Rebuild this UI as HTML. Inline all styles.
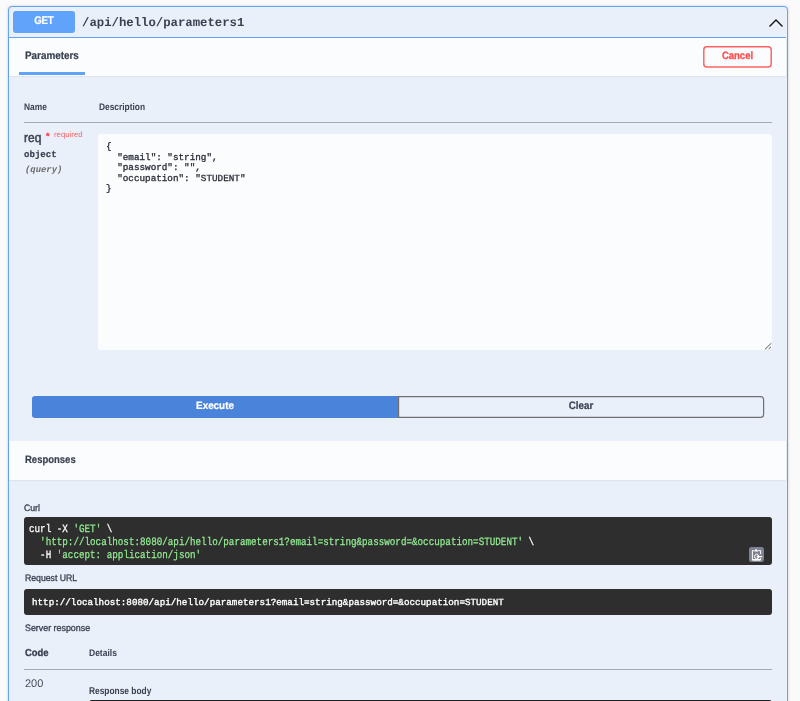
<!DOCTYPE html>
<html><head><meta charset="utf-8">
<style>
html,body{margin:0;padding:0;width:800px;height:701px;overflow:hidden;}
body{width:800px;height:701px;overflow:hidden;background:#fafafa;font-family:"Liberation Sans",sans-serif;color:#3b4151;}
#root{position:relative;width:800px;height:701px;overflow:hidden;background:#fafafa;}
.a{position:absolute;}
.t{position:absolute;white-space:pre;will-change:transform;text-rendering:geometricPrecision;}
</style></head>
<body><div id="root">
<div class="a" style="left:8px;top:6px;width:778px;height:760px;border:1px solid #5fa3fa;border-radius:4px;background:#e9f0fa;box-shadow:0 0 3px rgba(0,0,0,.19);"></div>
<div class="a" style="left:9px;top:37px;width:777px;height:1px;background:#5fa3fa"></div>
<div class="a" style="left:13px;top:11px;width:62px;height:22px;background:#5fa3fa;border-radius:3px"></div>
<div class="t" style="left:12.6px;top:17.10px;font-size:9.8px;line-height:9.8px;font-family:'Liberation Sans',sans-serif;font-weight:bold;color:#fff;letter-spacing:-0.25px;width:62px;text-align:center;transform:scaleY(1.14);transform-origin:0 8.30px;text-indent:-0.25px;-webkit-text-stroke:0.15px;">GET</div>
<div class="t" style="left:82px;top:16.88px;font-size:12.3px;line-height:12.3px;font-family:'Liberation Mono',monospace;font-weight:bold;color:#3b4151;">/api/hello/parameters1</div>
<svg class="a" style="left:766px;top:16px" width="20" height="14" viewBox="0 0 20 14"><polyline points="3.5,10.5 10,4 16.5,10.5" fill="none" stroke="#111" stroke-width="1.35"/></svg>
<div class="a" style="left:9px;top:38px;width:777px;height:38px;background:#fbfcfe;box-shadow:0 0.8px 1.6px rgba(0,0,0,.1)"></div>
<div class="t" style="left:24.5px;top:52.42px;font-size:9.9px;line-height:9.9px;font-family:'Liberation Sans',sans-serif;font-weight:bold;color:#3b4151;transform:scaleY(1.1);transform-origin:0 8.38px;-webkit-text-stroke:0.2px;">Parameters</div>
<div class="a" style="left:19px;top:72px;width:66px;height:3px;background:#5fa3fa"></div>
<svg class="a" style="left:703px;top:46px" width="69" height="22"><rect x="0.8" y="0.8" width="67.4" height="20.1" rx="3" fill="none" stroke="#ff6060" stroke-width="1.45"/></svg>
<div class="t" style="left:703px;top:51.86px;font-size:9.5px;line-height:9.5px;font-family:'Liberation Sans',sans-serif;font-weight:bold;color:#ff5050;width:69px;text-align:center;transform:scaleY(1.12);transform-origin:0 8.04px;-webkit-text-stroke:0.3px;">Cancel</div>
<div class="t" style="left:24.4px;top:102.59px;font-size:8.4px;line-height:8.4px;font-family:'Liberation Sans',sans-serif;font-weight:bold;color:#3b4151;transform:scaleY(1.14);transform-origin:0 7.11px;-webkit-text-stroke:0;">Name</div>
<div class="t" style="left:98.8px;top:102.59px;font-size:8.4px;line-height:8.4px;font-family:'Liberation Sans',sans-serif;font-weight:bold;color:#3b4151;transform:scaleY(1.14);transform-origin:0 7.11px;-webkit-text-stroke:0;">Description</div>
<div class="a" style="left:24px;top:122px;width:748px;height:1px;background:#a3aab6"></div>
<div class="t" style="left:24.3px;top:131.64px;font-size:12px;line-height:12px;font-family:'Liberation Sans',sans-serif;font-weight:normal;color:#3b4151;transform:scaleY(1.1);transform-origin:0 10.16px;-webkit-text-stroke:0.45px;">req</div>
<div class="t" style="left:45.5px;top:131.88px;font-size:9px;line-height:9px;font-family:'Liberation Sans',sans-serif;font-weight:bold;color:#ff3b3b;-webkit-text-stroke:0.2px;">*</div>
<div class="t" style="left:54.4px;top:130.60px;font-size:7.8px;line-height:7.8px;font-family:'Liberation Sans',sans-serif;font-weight:normal;color:#f76464;">required</div>
<div class="t" style="left:24px;top:150.33px;font-size:9.1px;line-height:9.1px;font-family:'Liberation Mono',monospace;font-weight:bold;color:#3b4151;-webkit-text-stroke:0.2px;">object</div>
<div class="t" style="left:25px;top:165.88px;font-size:8.9px;line-height:8.9px;font-family:'Liberation Mono',monospace;font-weight:bold;color:#6a6a6a;font-style:italic;">(query)</div>
<div class="a" style="left:98px;top:134px;width:674px;height:216px;background:#fbfcfe;border-radius:3px"></div>
<div class="t" style="left:106px;top:141.88px;font-size:9.3px;line-height:10.5px;font-family:'Liberation Mono',monospace;font-weight:normal;color:#2a2e38;-webkit-text-stroke:0.3px;">{
  "email": "string",
  "password": "",
  "occupation": "STUDENT"
}</div>
<svg class="a" style="left:762px;top:340px" width="10" height="10" viewBox="0 0 10 10"><path d="M3 9.3 L9.3 3.2 M6.6 9.0 L9.0 6.8" stroke="#3a3a3a" stroke-width="0.85"/></svg>
<div class="a" style="left:32px;top:396px;width:366px;height:22px;background:#4a84da;border-radius:3px 0 0 3px"></div>
<div class="t" style="left:32px;top:401.82px;font-size:9.9px;line-height:9.9px;font-family:'Liberation Sans',sans-serif;font-weight:bold;color:#fff;width:366px;text-align:center;transform:scaleY(1.07);transform-origin:0 8.38px;-webkit-text-stroke:0.2px;">Execute</div>
<svg class="a" style="left:398px;top:396px" width="367" height="22"><path d="M0.6 0.6 H362.6 A3 3 0 0 1 365.6 3.6 V18.4 A3 3 0 0 1 362.6 21.4 H0.6 Z" fill="none" stroke="#6f6f6f" stroke-width="1.2"/></svg>
<div class="t" style="left:398px;top:401.90px;font-size:9.8px;line-height:9.8px;font-family:'Liberation Sans',sans-serif;font-weight:bold;color:#3b4151;width:366px;text-align:center;transform:scaleY(1.11);transform-origin:0 8.30px;-webkit-text-stroke:0.2px;">Clear</div>
<div class="a" style="left:9px;top:441px;width:777px;height:39px;background:#fbfcfe;box-shadow:0 0.8px 1.6px rgba(0,0,0,.1)"></div>
<div class="t" style="left:24.5px;top:456.36px;font-size:9.5px;line-height:9.5px;font-family:'Liberation Sans',sans-serif;font-weight:bold;color:#3b4151;transform:scaleY(1.13);transform-origin:0 8.04px;-webkit-text-stroke:0.2px;">Responses</div>
<div class="t" style="left:24.3px;top:504.04px;font-size:8.7px;line-height:8.7px;font-family:'Liberation Sans',sans-serif;font-weight:normal;color:#3b4151;transform:scaleY(1.07);transform-origin:0 7.36px;-webkit-text-stroke:0.3px;">Curl</div>
<div class="a" style="left:24px;top:517px;width:748px;height:48px;background:#2e2e2e;border-radius:3px"></div>
<div class="t" style="left:29px;top:525.36px;font-size:9.26px;line-height:10.75px;font-family:'Liberation Mono',monospace;font-weight:normal;color:#fff;transform:scaleY(1.2);transform-origin:0 7.84px;-webkit-text-stroke:0.22px;">curl -X <span style="color:#92ec92">'GET'</span> \
  <span style="color:#92ec92">'http://localhost:8080/api/hello/parameters1?email=string&amp;password=&amp;occupation=STUDENT'</span> \
  -H <span style="color:#92ec92">'accept: application/json'</span></div>
<div class="a" style="left:749px;top:546.5px;width:15px;height:15.5px;background:#7d8293;border-radius:2.5px"></div>
<svg class="a" style="left:749px;top:546.5px" width="15" height="15.5" viewBox="0 0 15 15.5"><path d="M5.2 3.6 H3.4 V12.8 H11.6 V11.2" fill="none" stroke="#fff" stroke-width="1"/><path d="M3.4 12.9 H11.6" stroke="#fff" stroke-width="1.4"/><path d="M9.4 3.6 H11.6 V7.2" fill="none" stroke="#fff" stroke-width="1"/><path d="M5.0 4.6 L7.0 1.7 L9.6 4.6 Z" fill="#fff"/><path d="M9.0 7.5 A2.3 2.3 0 1 0 9.2 11.3" fill="none" stroke="#fff" stroke-width="1"/><path d="M13.2 9.6 H8.4 M9.9 8.1 L8.3 9.6 L9.9 11.1" fill="none" stroke="#fff" stroke-width="1.2"/></svg>
<div class="t" style="left:24.5px;top:573.84px;font-size:8.7px;line-height:8.7px;font-family:'Liberation Sans',sans-serif;font-weight:normal;color:#3b4151;transform:scaleY(1.07);transform-origin:0 7.36px;-webkit-text-stroke:0.3px;">Request URL</div>
<div class="a" style="left:24px;top:589px;width:748px;height:25.5px;background:#2e2e2e;border-radius:3px"></div>
<div class="t" style="left:31.5px;top:597.71px;font-size:9.25px;line-height:9.25px;font-family:'Liberation Mono',monospace;font-weight:normal;color:#fff;-webkit-text-stroke:0.35px;">http://localhost:8080/api/hello/parameters1?email=string&amp;password=&amp;occupation=STUDENT</div>
<div class="t" style="left:24.5px;top:623.87px;font-size:8.9px;line-height:8.9px;font-family:'Liberation Sans',sans-serif;font-weight:normal;color:#3b4151;transform:scaleY(1.045);transform-origin:0 7.53px;-webkit-text-stroke:0.3px;">Server response</div>
<div class="t" style="left:24.5px;top:648.34px;font-size:9.4px;line-height:9.4px;font-family:'Liberation Sans',sans-serif;font-weight:bold;color:#3b4151;transform:scaleY(1.08);transform-origin:0 7.96px;-webkit-text-stroke:0.3px;">Code</div>
<div class="t" style="left:89px;top:649.10px;font-size:8.5px;line-height:8.5px;font-family:'Liberation Sans',sans-serif;font-weight:bold;color:#3b4151;transform:scaleY(1.13);transform-origin:0 7.20px;-webkit-text-stroke:0;">Details</div>
<div class="a" style="left:24px;top:669px;width:748px;height:1px;background:#a3aab6"></div>
<div class="t" style="left:24.5px;top:679.09px;font-size:11px;line-height:11px;font-family:'Liberation Sans',sans-serif;font-weight:normal;color:#4a4f5c;">200</div>
<div class="t" style="left:89px;top:687.09px;font-size:8.4px;line-height:8.4px;font-family:'Liberation Sans',sans-serif;font-weight:bold;color:#3b4151;transform:scaleY(1.18);transform-origin:0 7.11px;-webkit-text-stroke:0;">Response body</div>
<div class="a" style="left:89.3px;top:700px;width:682.7px;height:60px;background:#1e1e1e;border-radius:3px"></div>
</div></body></html>
